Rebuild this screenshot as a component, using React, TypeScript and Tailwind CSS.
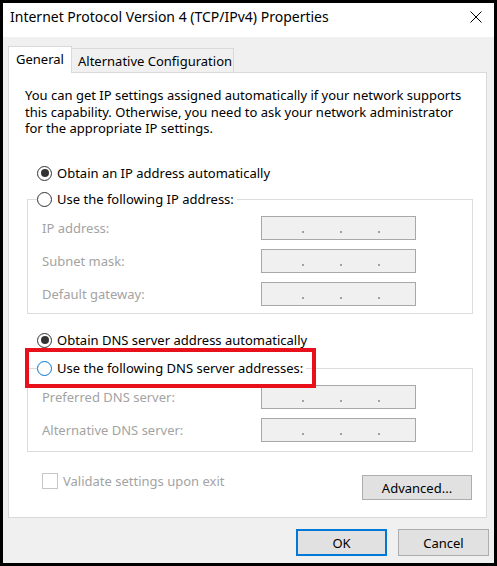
import React from "react";

// Windows 10 style "IPv4 Properties" dialog

function Radio({ checked, focus }: { checked?: boolean; focus?: boolean }) {
  return (
    <span
      className={`flex h-[15px] w-[15px] shrink-0 items-center justify-center rounded-full border bg-white ${
        focus ? "border-[#0078d7]" : "border-[#333333]"
      }`}
    >
      {checked && <span className="h-[8px] w-[8px] rounded-full bg-[#333333]" />}
    </span>
  );
}

function IpField() {
  return (
    <div className="h-[24px] w-[155px] border border-[#a8a8a8] bg-[#f0f0f0]">
      <div className="flex h-full items-end gap-[36px] pb-[6px] pl-[40px]">
        <span className="h-[2px] w-[2px] bg-[#a0a0a0]" />
        <span className="h-[2px] w-[2px] bg-[#a0a0a0]" />
        <span className="h-[2px] w-[2px] bg-[#a0a0a0]" />
      </div>
    </div>
  );
}

function FieldRow({ label }: { label: string }) {
  return (
    <div className="flex items-center">
      <span className="w-[233px] pl-[14px] text-[#a3a3a3]">{label}</span>
      <IpField />
    </div>
  );
}

export default function App() {
  return (
    <div className="relative flex h-[566px] w-[497px] flex-col overflow-hidden border-[3px] border-black bg-[#f0f0f0] font-['Noto_Sans',sans-serif] text-[13px] leading-[18px] text-black">
      {/* title bar */}
      <div className="flex h-[34px] shrink-0 items-center justify-between bg-white pb-[6px] pl-[7px] pr-[12px]">
        <span className="text-[14px]">Internet Protocol Version 4 (TCP/IPv4) Properties</span>
        <svg width="12" height="12" viewBox="0 0 12 12">
          <path d="M0.5 0.5 L11.5 11.5 M11.5 0.5 L0.5 11.5" stroke="#000" strokeWidth="1" fill="none" />
        </svg>
      </div>

      {/* tabs */}
      <div className="ml-[5px] mt-[9px] flex items-end">
        <div className="relative z-10 -mb-px flex h-[27px] w-[64px] items-start whitespace-nowrap border border-b-0 border-[#d9d9d9] bg-white pl-[7px] pt-[3px]">
          General
        </div>
        <div className="flex h-[24px] w-[162px] items-start whitespace-nowrap border border-b-0 border-l-0 border-[#d9d9d9] bg-[#f0f0f0] pl-[6px] pt-[3px]">
          Alternative Configuration
        </div>
      </div>

      {/* panel */}
      <div className="ml-[5px] flex h-[446px] w-[479px] flex-col border border-[#d9d9d9] bg-white">
        <p className="mt-[14px] whitespace-nowrap pl-[16px] leading-[16.5px]">
          You can get IP settings assigned automatically if your network supports
          <br />
          this capability. Otherwise, you need to ask your network administrator
          <br />
          for the appropriate IP settings.
        </p>

        <label className="ml-[28px] mt-[27.5px] flex h-[18px] items-center gap-[5px]">
          <Radio checked />
          Obtain an IP address automatically
        </label>

        <fieldset className="ml-[18px] mt-[8px] w-[446px] border border-[#dcdcdc] pb-[7px]">
          <legend className="ml-[9px] pr-[3px]">
            <span className="flex h-[18px] items-center gap-[5px]">
              <Radio />
              Use the following IP address:
            </span>
          </legend>
          <div className="mt-[8px] flex flex-col gap-[9px]">
            <FieldRow label="IP address:" />
            <FieldRow label="Subnet mask:" />
            <FieldRow label="Default gateway:" />
          </div>
        </fieldset>

        <label className="ml-[28px] mt-[17px] flex h-[18px] items-center gap-[5px]">
          <Radio checked />
          Obtain DNS server address automatically
        </label>

        <fieldset className="ml-[18px] mt-[10px] w-[446px] border border-[#dcdcdc] pb-[9px]">
          <legend className="ml-[9px] pr-[3px]">
            <span className="flex h-[18px] items-center gap-[5px]">
              <Radio focus />
              Use the following DNS server addresses:
            </span>
          </legend>
          <div className="mt-[8px] flex flex-col gap-[9px]">
            <FieldRow label="Preferred DNS server:" />
            <FieldRow label="Alternative DNS server:" />
          </div>
        </fieldset>

        <div className="mt-[20px] flex items-start justify-between pr-[14px]">
          <label className="ml-[33px] flex h-[18px] items-center gap-[5px] text-[#a3a3a3]">
            <span className="h-[16px] w-[16px] border border-[#c6c6c6] bg-white" />
            Validate settings upon exit
          </label>
          <button className="mt-[3px] h-[25px] w-[110px] border border-[#adadad] bg-[#e1e1e1]">
            Advanced...
          </button>
        </div>
      </div>

      {/* dialog buttons */}
      <div className="mr-[5px] mt-[11px] flex justify-end gap-[11px]">
        <button className="h-[27px] w-[91px] border-2 border-[#0078d7] bg-[#e1e1e1]">OK</button>
        <button className="h-[27px] w-[91px] border border-[#adadad] bg-[#e1e1e1]">Cancel</button>
      </div>

      {/* red highlight annotation */}
      <div className="pointer-events-none absolute left-[22px] top-[345px] h-[40px] w-[291px] border-4 border-[#e8111b]" />
    </div>
  );
}
